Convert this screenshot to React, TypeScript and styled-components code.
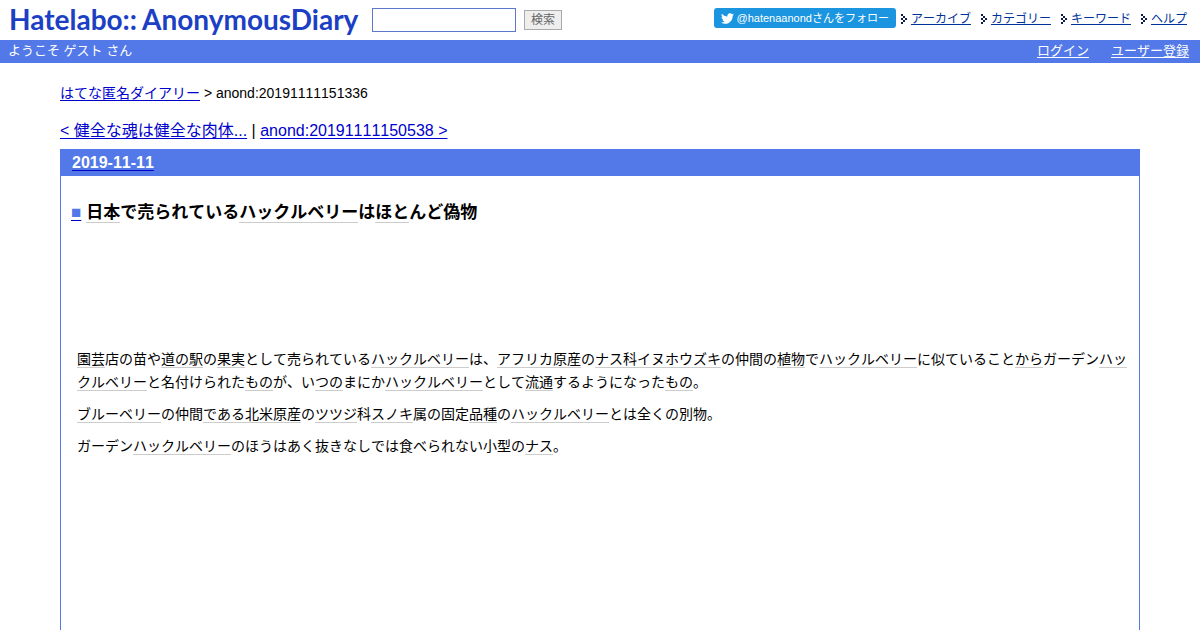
import React from "react";
import styled, { createGlobalStyle } from "styled-components";
import { FaTwitter } from "react-icons/fa";

const blue = "#5279e7";

const GlobalStyle = createGlobalStyle`
  body {
    margin: 0;
    background: #fff;
    color: #000;
    font-family: "Liberation Sans", "Noto Sans CJK JP", sans-serif;
    font-kerning: none;
  }
  a {
    color: #0000cc;
    text-underline-offset: 2px;
    text-decoration-skip-ink: none;
  }
`;

const Header = styled.header`
  display: flex;
  align-items: flex-start;
  height: 40px;
  padding: 0 13px 0 9px;
`;

const Logo = styled.a`
  display: flex;
  gap: 5px;
  width: 363px;
  flex: none;
  color: #1c3fc4;
  font: 700 28px/38px Lato, sans-serif;
  text-decoration: none;
  white-space: nowrap;
`;

const SearchForm = styled.form`
  display: flex;
  align-items: center;
  gap: 8px;
  padding-top: 8px;
`;

const SearchInput = styled.input`
  box-sizing: border-box;
  width: 144px;
  height: 24px;
  padding: 2px 4px;
  border: 1px solid #5c78c8;
  background: #fff;
  font: 13px "Liberation Sans", "Noto Sans CJK JP", sans-serif;
`;

const SearchButton = styled.button`
  box-sizing: border-box;
  height: 20px;
  padding: 0 6px;
  border: 1px solid #aaa;
  background: #eee;
  color: #666;
  font: 12px/16px "Liberation Sans", "Noto Sans CJK JP", sans-serif;
`;

const Tools = styled.div`
  display: flex;
  align-items: flex-start;
  gap: 5px;
  margin-left: auto;
  padding-top: 8px;
`;

const FollowButton = styled.a`
  display: flex;
  align-items: center;
  gap: 3px;
  height: 20px;
  padding: 0 7px;
  border-radius: 3px;
  background: #1b95e0;
  color: #fff;
  font-size: 11px;
  line-height: 20px;
  text-decoration: none;
  white-space: nowrap;
`;

const Menu = styled.nav`
  display: flex;
  gap: 10px;
`;

const MenuItem = styled.span`
  display: flex;
  align-items: center;
  gap: 4px;
  white-space: nowrap;
`;

const MenuLink = styled.a`
  color: #003399;
  font-size: 12px;
  line-height: 22px;
  text-underline-offset: 1px;
`;

const UserBar = styled.div`
  display: flex;
  justify-content: space-between;
  padding: 0 11px 2px 8px;
  background: ${blue};
  color: #fff;
  font-size: 13px;
  line-height: 21px;
`;

const UserLinks = styled.div`
  display: flex;
  gap: 22px;
`;

const UserLink = styled.a`
  color: #fff;
`;

const Main = styled.main`
  margin: 0 5%;
  padding-top: 20px;
`;

const Breadcrumb = styled.div`
  font-size: 14px;
  line-height: 20px;
`;

const Pager = styled.div`
  margin: 16px 0 6px;
  font-size: 16px;
  line-height: 24px;
`;

const Day = styled.section`
  min-height: 500px;
  border: 1px solid ${blue};
`;

const DayTitle = styled.h2`
  margin: 0;
  padding: 0 11px;
  background: ${blue};
  font-size: 16px;
  line-height: 26px;
`;

const DayLink = styled.a`
  color: #0000cc;
`;

const DayText = styled.span`
  color: #fff;
`;

const Article = styled.article`
  padding: 25px 10px 0;
`;

const ArticleTitle = styled.h3`
  margin: 0 0 123px;
  font-size: 17px;
  line-height: 24px;
`;

const Anchor = styled.a`
  margin-right: 5px;
`;

const Square = styled.span`
  color: ${blue};
`;

const Paragraph = styled.p`
  margin: 0 0 9px;
  padding: 0 0 0 6px;
  font-size: 14px;
  line-height: 23px;
  word-break: break-all;
`;

const Keyword = styled.a`
  border-bottom: 1px solid #ccc;
  color: inherit;
  text-decoration: none;
`;

const arrowDots = [
  [0, 0], [2, 2], [4, 4], [2, 6], [0, 8], [0, 4],
];

const Arrow = () => (
  <svg width="6" height="10" viewBox="0 0 6 10" shapeRendering="crispEdges" aria-hidden="true">
    {arrowDots.map(([x, y]) => (
      <rect key={`${x}-${y}`} x={x} y={y} width="2" height="2" fill="#0a2050" />
    ))}
  </svg>
);

/* Words in [brackets] link to their keyword page. */
const Linked = ({ text }: { text: string }) => (
  <>
    {text.split(/[[\]]/).map((part, i) =>
      i % 2 ? <Keyword key={i} href="#keyword">{part}</Keyword> : part
    )}
  </>
);

const menu = ["アーカイブ", "カテゴリー", "キーワード", "ヘルプ"];

const paragraphs = [
  "[園芸]店の苗や[道の駅]の[果実]として売られている[ハックルベリー]は、[アフリカ原産]の[ナス科イヌホウズキ]の仲間の[植物]で[ハックルベリー]に似ていること[から]ガーデン[ハックルベリー]と名付けられた[もの]が、い[つの]まにか[ハックルベリー]として[流通]するようになった[もの]。",
  "[ブルーベリー]の仲間[である北米原産]の[ツツジ]科[スノキ]属の固定[品種]の[ハックルベリー]とは全くの別物。",
  "ガーデン[ハックルベリー]のほうはあく抜きなしでは食べられない小型の[ナス]。",
];

export default function App() {
  return (
    <>
      <GlobalStyle />
      <Header>
        <Logo href="#top"><span>Hatelabo::</span><span>AnonymousDiary</span></Logo>
        <SearchForm>
          <SearchInput type="text" aria-label="検索" />
          <SearchButton type="button">検索</SearchButton>
        </SearchForm>
        <Tools>
          <FollowButton href="#follow">
            <FaTwitter size={13} aria-hidden="true" />
            <span>@hatenaanondさんをフォロー</span>
          </FollowButton>
          <Menu>
            {menu.map((label) => (
              <MenuItem key={label}>
                <Arrow />
                <MenuLink href="#menu">{label}</MenuLink>
              </MenuItem>
            ))}
          </Menu>
        </Tools>
      </Header>
      <UserBar>
        <span>ようこそ ゲスト さん</span>
        <UserLinks>
          <UserLink href="#login">ログイン</UserLink>
          <UserLink href="#register">ユーザー登録</UserLink>
        </UserLinks>
      </UserBar>
      <Main>
        <Breadcrumb>
          <a href="#home">はてな匿名ダイアリー</a> &gt; anond:20191111151336
        </Breadcrumb>
        <Pager>
          <a href="#prev">&lt; 健全な魂は健全な肉体...</a> | <a href="#next">anond:20191111150538 &gt;</a>
        </Pager>
        <Day>
          <DayTitle><DayLink href="#day"><DayText>2019-11-11</DayText></DayLink></DayTitle>
          <Article>
            <ArticleTitle>
              <Anchor href="#entry"><Square>■</Square></Anchor>
              <Linked text="[日本]で売られている[ハックルベリー]は[ほと]んど偽物" />
            </ArticleTitle>
            {paragraphs.map((text) => (
              <Paragraph key={text}><Linked text={text} /></Paragraph>
            ))}
          </Article>
        </Day>
      </Main>
    </>
  );
}
